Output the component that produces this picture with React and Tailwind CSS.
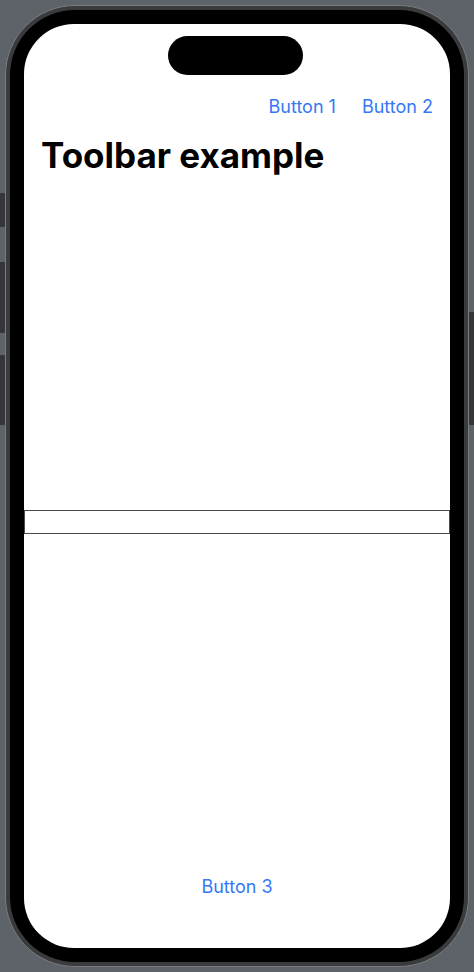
export default function App() {
  return (
    <div className="relative w-[474px] h-[972px] bg-[#5e6269] p-[5px] overflow-hidden" style={{ fontFamily: 'Inter, "Noto Sans", sans-serif' }}>
      {/* hardware buttons on the frame edges */}
      <div className="absolute left-0 top-[193px] w-[5px] h-[34px] bg-[#34363a] rounded-r-[1px]" />
      <div className="absolute left-0 top-[262px] w-[5px] h-[71px] bg-[#34363a] rounded-r-[1px]" />
      <div className="absolute left-0 top-[355px] w-[5px] h-[70px] bg-[#34363a] rounded-r-[1px]" />
      <div className="absolute right-0 top-[312px] w-[5px] h-[113px] bg-[#34363a] rounded-l-[1px]" />

      {/* device body */}
      <div className="h-full rounded-[70px] bg-[#3a3b3d] border border-[#7a7c80] p-[4px]">
        <div className="h-full rounded-[65px] bg-black p-[14px]">
          {/* screen */}
          <div className="relative h-full rounded-[50px] bg-white overflow-hidden flex flex-col">
            {/* dynamic island */}
            <div className="absolute left-[144px] top-[12px] w-[135px] h-[39px] rounded-full bg-black" />

            <div className="h-[60px] shrink-0" />
            <div className="h-[44px] shrink-0 flex items-center justify-end gap-[26px] pr-[17px] text-[18px] text-[#3478f6]">
              <span>Button 1</span>
              <span>Button 2</span>
            </div>
            <div className="h-[54px] shrink-0 pl-[17px] pt-[7px] flex items-start">
              <h1 className="text-[35px] leading-[41px] font-bold text-black">Toolbar example</h1>
            </div>
            <div className="h-[328px] shrink-0" />
            <div className="h-[24px] shrink-0 border border-[#4a4a4a] bg-white" />
            <div className="flex-1" />
            <div className="h-[44px] shrink-0 flex items-center justify-center text-[18px] text-[#3478f6]">
              <span>Button 3</span>
            </div>
            <div className="h-[40px] shrink-0" />
          </div>
        </div>
      </div>
    </div>
  );
}
